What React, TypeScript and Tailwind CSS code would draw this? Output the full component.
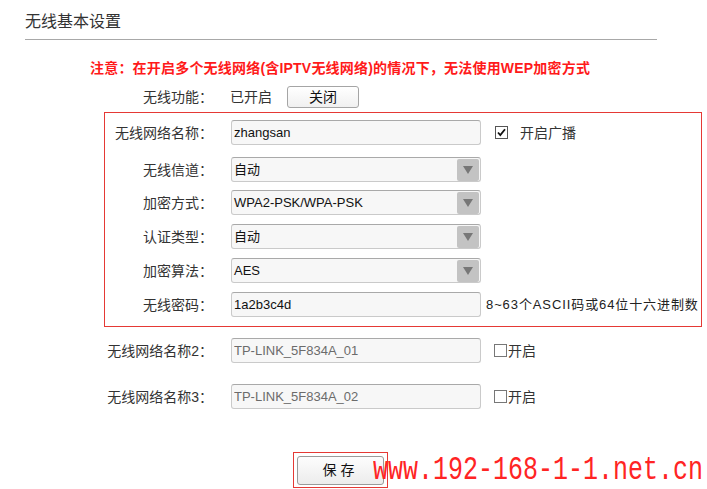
import React from 'react';

const FONT = "font-['Liberation_Sans','Noto_Sans_CJK_SC',sans-serif]";

const Label: React.FC<{ text: string }> = ({ text }) => (
  <div className="w-[108px] text-right text-[14px] leading-[20px] text-[#333] whitespace-nowrap">{text}</div>
);

const TextField: React.FC<{ value: string; disabled?: boolean }> = ({ value, disabled }) => (
  <input
    readOnly
    value={value}
    className={`ml-[18px] h-[25px] w-[250px] rounded-[3px] border border-[#cacaca] border-t-[#a9a9a9] bg-[#f7f7f7] px-[2px] text-[13px] leading-[20px] outline-none ${FONT} ${
      disabled ? 'text-[#6b6b6b]' : 'text-[#111]'
    }`}
  />
);

const SelectField: React.FC<{ value: string }> = ({ value }) => (
  <div className="ml-[18px] flex h-[25px] w-[250px] items-center justify-between rounded-[3px] border border-[#cacaca] border-t-[#a9a9a9] bg-[#f7f7f7] pl-[2px] pr-[1px]">
    <span className="text-[13px] leading-[20px] text-[#111]">{value}</span>
    <span className="flex h-[22px] w-[22px] items-center justify-center rounded-[2px] bg-[#c3c3c3]">
      <svg width="10" height="8" viewBox="0 0 10 8">
        <path d="M0 0 H10 L5 8 Z" fill="#777" />
      </svg>
    </span>
  </div>
);

const CheckBox: React.FC<{ checked?: boolean }> = ({ checked }) => (
  <svg width="13" height="13" viewBox="0 0 13 13" className="shrink-0">
    <rect x="0.5" y="0.5" width="12" height="12" fill="#fff" stroke={checked ? '#555' : '#777'} />
    {checked && <path d="M3 6.5 L5.3 9 L10 3.2" fill="none" stroke="#111" strokeWidth="1.8" />}
  </svg>
);

export default function App() {
  return (
    <div className={`relative h-[489px] w-[707px] overflow-hidden bg-white text-[#333] ${FONT}`}>
      {/* title */}
      <div className="pl-[25px] pt-[12px]">
        <div className="w-[632px] border-b border-[#a8a8a8] pb-[7px] text-[16px] leading-[20px] text-[#333]">
          无线基本设置
        </div>
      </div>

      {/* notice */}
      <div className="mt-[18px] pl-[90px] text-[14px] font-bold leading-[20px] tracking-[0.2px] text-[#ff1a1a]">
        注意：在开启多个无线网络(含IPTV无线网络)的情况下，无法使用WEP加密方式
      </div>

      {/* wireless switch */}
      <div className="mt-[8px] flex h-[22px] items-center pl-[105px]">
        <Label text="无线功能：" />
        <span className="ml-[17px] text-[14px] leading-[20px]">已开启</span>
        <button className="ml-[15px] h-[22px] w-[72px] rounded-[3px] border border-[#a5a5a5] bg-gradient-to-b from-white to-[#f0f0f0] text-[14px] leading-[20px] text-[#111]">
          关闭
        </button>
      </div>

      {/* main ssid box */}
      <div className="ml-[104px] mt-[4px] h-[215px] w-[598px] border border-[#e53935] pt-[7px]">
        <div className="flex h-[25px] items-center">
          <Label text="无线网络名称：" />
          <TextField value="zhangsan" />
          <span className="ml-[14px]">
            <CheckBox checked />
          </span>
          <span className="ml-[12px] text-[14px] leading-[20px]">开启广播</span>
        </div>
        <div className="mt-[12px] flex h-[25px] items-center">
          <Label text="无线信道：" />
          <SelectField value="自动" />
        </div>
        <div className="mt-[8px] flex h-[25px] items-center">
          <Label text="加密方式：" />
          <SelectField value="WPA2-PSK/WPA-PSK" />
        </div>
        <div className="mt-[9px] flex h-[25px] items-center">
          <Label text="认证类型：" />
          <SelectField value="自动" />
        </div>
        <div className="mt-[9px] flex h-[25px] items-center">
          <Label text="加密算法：" />
          <SelectField value="AES" />
        </div>
        <div className="mt-[9px] flex h-[25px] items-center">
          <Label text="无线密码：" />
          <TextField value="1a2b3c4d" />
          <span className="ml-[5px] whitespace-nowrap text-[13px] leading-[20px] tracking-[0.9px] text-[#222]">
            8~63个ASCII码或64位十六进制数
          </span>
        </div>
      </div>

      {/* extra ssids */}
      <div className="mt-[11px] flex h-[25px] items-center pl-[105px]">
        <Label text="无线网络名称2：" />
        <TextField value="TP-LINK_5F834A_01" disabled />
        <span className="ml-[13px]">
          <CheckBox />
        </span>
        <span className="ml-[1px] text-[14px] leading-[20px]">开启</span>
      </div>
      <div className="mt-[21px] flex h-[25px] items-center pl-[105px]">
        <Label text="无线网络名称3：" />
        <TextField value="TP-LINK_5F834A_02" disabled />
        <span className="ml-[13px]">
          <CheckBox />
        </span>
        <span className="ml-[1px] text-[14px] leading-[20px]">开启</span>
      </div>

      {/* save */}
      <div className="ml-[293px] mt-[43px] flex h-[36px] w-[95px] items-center justify-center border border-[#e53935]">
        <button className="h-[29px] w-[87px] rounded-[3px] border border-[#9a9a9a] bg-gradient-to-b from-[#fdfdfd] to-[#ececec] text-[14px] leading-[20px] tracking-[4px] text-[#111]">
          保存
        </button>
      </div>

      {/* watermark */}
      <div className="absolute left-[373px] top-[461px] whitespace-nowrap font-['Liberation_Mono',monospace] text-[25px] leading-[30px] text-[#ff2424]">
        <span className="inline-block origin-bottom scale-y-[1.35]">www.192-168-1-1.net.cn</span>
      </div>
    </div>
  );
}
